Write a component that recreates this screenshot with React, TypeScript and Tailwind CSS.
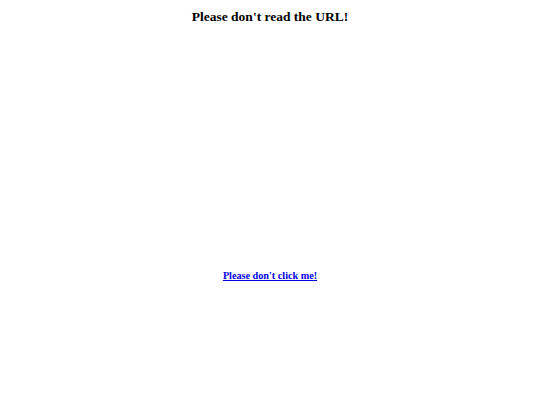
export default function App() {
  return (
    <div className="w-[540px] h-[405px] bg-white flex flex-col items-center font-['Liberation_Serif','Times_New_Roman',serif] text-black">
      <h1 className="mt-[9px] text-[13.5px] leading-[16px] font-bold">Please don't read the URL!</h1>
      <a
        href="#"
        className="mt-[245px] text-[10.2px] leading-[12px] font-bold text-[#0000ee] underline"
      >
        Please don't click me!
      </a>
    </div>
  );
}
